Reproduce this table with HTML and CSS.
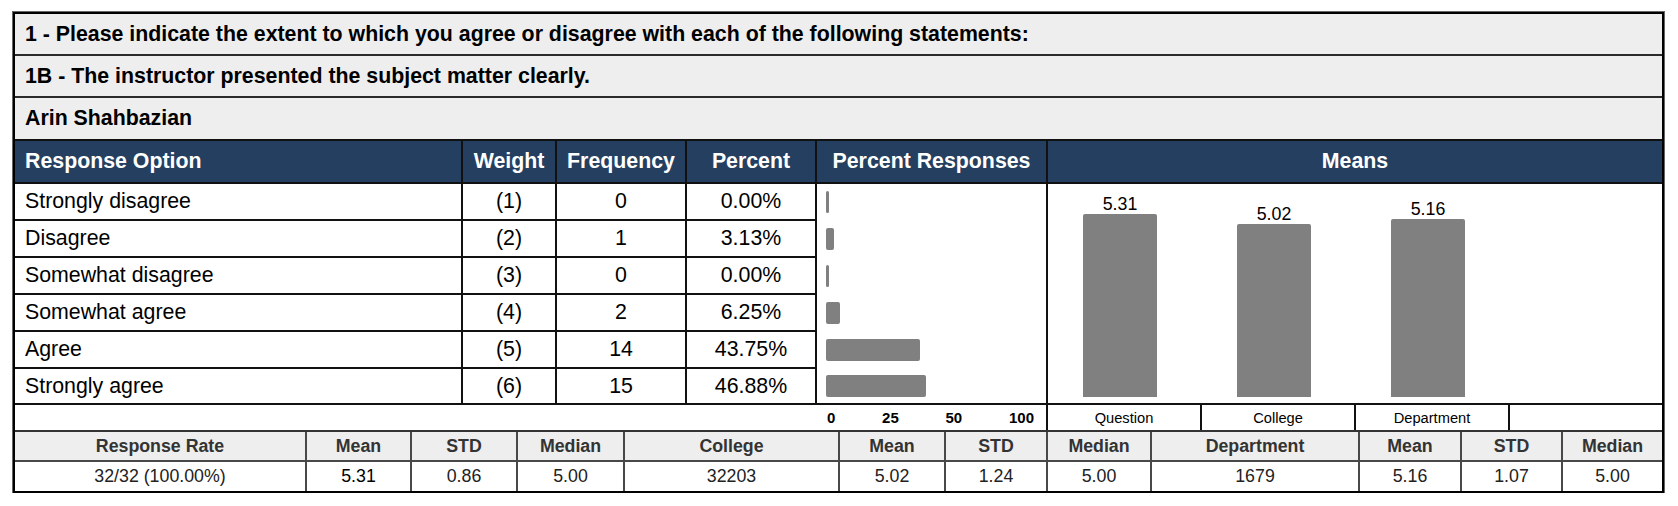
FILE: index.html
```html
<!DOCTYPE html>
<html>
<head>
<meta charset="utf-8">
<title>Question Report</title>
<link rel="stylesheet" href="styles.css">
</head>
<body>
<div class="report">
  <div class="title-row">1 - Please indicate the extent to which you agree or disagree with each of the following statements:</div>
  <div class="title-row">1B - The instructor presented the subject matter clearly.</div>
  <div class="title-row last">Arin Shahbazian</div>

  <div class="grid">
    <div class="hd left">Response Option</div>
    <div class="hd">Weight</div>
    <div class="hd">Frequency</div>
    <div class="hd">Percent</div>
    <div class="hd">Percent Responses</div>
    <div class="hd">Means</div>

    <div class="pr-chart">
      <div class="pr-slot"><span class="hbar" style="width:3px"></span></div>
      <div class="pr-slot"><span class="hbar" style="width:8px"></span></div>
      <div class="pr-slot"><span class="hbar" style="width:3px"></span></div>
      <div class="pr-slot"><span class="hbar" style="width:14px"></span></div>
      <div class="pr-slot"><span class="hbar" style="width:94px"></span></div>
      <div class="pr-slot"><span class="hbar" style="width:100px"></span></div>
    </div>

    <div class="means-chart">
      <div class="mcol"><div class="mbar-wrap"><div class="mval">5.31</div><div class="vbar" style="height:183px"></div></div></div>
      <div class="mcol"><div class="mbar-wrap"><div class="mval">5.02</div><div class="vbar" style="height:173px"></div></div></div>
      <div class="mcol"><div class="mbar-wrap"><div class="mval">5.16</div><div class="vbar" style="height:178px"></div></div></div>
      <div class="mcol"></div>
    </div>

    <div class="cell left">Strongly disagree</div>
    <div class="cell">(1)</div>
    <div class="cell">0</div>
    <div class="cell">0.00%</div>

    <div class="cell left">Disagree</div>
    <div class="cell">(2)</div>
    <div class="cell">1</div>
    <div class="cell">3.13%</div>

    <div class="cell left">Somewhat disagree</div>
    <div class="cell">(3)</div>
    <div class="cell">0</div>
    <div class="cell">0.00%</div>

    <div class="cell left">Somewhat agree</div>
    <div class="cell">(4)</div>
    <div class="cell">2</div>
    <div class="cell">6.25%</div>

    <div class="cell left">Agree</div>
    <div class="cell">(5)</div>
    <div class="cell">14</div>
    <div class="cell">43.75%</div>

    <div class="cell left">Strongly agree</div>
    <div class="cell">(6)</div>
    <div class="cell">15</div>
    <div class="cell">46.88%</div>

    <div class="axis-row">
      <div class="axis"><span>0</span><span>25</span><span>50</span><span>100</span></div>
    </div>
    <div class="means-axis">
      <div>Question</div>
      <div>College</div>
      <div>Department</div>
      <div></div>
    </div>
  </div>

  <div class="footer">
    <div class="fh">Response Rate</div>
    <div class="fh">Mean</div>
    <div class="fh">STD</div>
    <div class="fh">Median</div>
    <div class="fh">College</div>
    <div class="fh">Mean</div>
    <div class="fh">STD</div>
    <div class="fh">Median</div>
    <div class="fh">Department</div>
    <div class="fh">Mean</div>
    <div class="fh">STD</div>
    <div class="fh">Median</div>

    <div class="fd">32/32 (100.00%)</div>
    <div class="fd strong">5.31</div>
    <div class="fd">0.86</div>
    <div class="fd">5.00</div>
    <div class="fd">32203</div>
    <div class="fd">5.02</div>
    <div class="fd">1.24</div>
    <div class="fd">5.00</div>
    <div class="fd">1679</div>
    <div class="fd">5.16</div>
    <div class="fd">1.07</div>
    <div class="fd">5.00</div>
  </div>
</div>
</body>
</html>
```

FILE: styles.css
```css
* {
  box-sizing: border-box;
}

html,
body {
  margin: 0;
  padding: 0;
  background: #fff;
}

body {
  font-family: "Liberation Sans", Arial, Helvetica, sans-serif;
  color: #000;
}

.report {
  width: 1651px;
  margin: 12px 0 0 13px;
  border: 2px solid #000;
  outline: 1px solid #666;
}

.title-row {
  height: 42px;
  display: flex;
  align-items: center;
  padding-left: 10px;
  background: #eeeeee;
  border-bottom: 2px solid #2a2a2a;
  font-size: 21.33px;
  font-weight: bold;
}

.title-row.last {
  height: 43px;
  border-bottom-color: #111;
}

.grid {
  display: grid;
  grid-template-columns: 446px 92px 128px 128px 229px 614px;
  grid-template-rows: 41px 35px 35px 35px 35px 35px 34px 25px;
  gap: 2px;
  background: #111;
}

.hd {
  display: flex;
  align-items: center;
  justify-content: center;
  background: #243f5f;
  color: #fff;
  font-size: 21.33px;
  font-weight: bold;
}

.cell {
  display: flex;
  align-items: center;
  justify-content: center;
  background: #fff;
  font-size: 21.33px;
}

.hd.left,
.cell.left {
  justify-content: flex-start;
  padding-left: 10px;
}

/* Percent responses chart */
.pr-chart {
  grid-column: 5;
  grid-row: 2 / 8;
  display: grid;
  grid-template-rows: 35px 35px 35px 35px 35px 34px;
  row-gap: 2px;
  padding-left: 9px;
  background: #fff;
}

.pr-slot {
  display: flex;
  align-items: center;
}

.hbar {
  display: block;
  height: 22px;
  background: #808080;
  border-radius: 2px;
}

/* Means chart */
.means-chart {
  grid-column: 6;
  grid-row: 2 / 8;
  display: grid;
  grid-template-columns: repeat(4, 1fr);
  column-gap: 2px;
  padding-bottom: 6px;
  background: #fff;
}

.mcol {
  display: flex;
  flex-direction: column;
  justify-content: flex-end;
  padding-left: 35px;
}

.mbar-wrap {
  width: 74px;
  display: flex;
  flex-direction: column;
  align-items: center;
}

.mval {
  font-size: 17.78px;
  line-height: 18px;
  margin-bottom: 1px;
}

.vbar {
  width: 74px;
  background: #808080;
  border-radius: 2px 2px 0 0;
}

/* Axis row */
.axis-row {
  grid-column: 1 / 6;
  grid-row: 8;
  display: flex;
  justify-content: flex-end;
  background: #fff;
}

.axis {
  width: 229px;
  display: flex;
  align-items: center;
  justify-content: space-between;
  padding: 0 12px 0 10px;
  font-size: 15px;
  font-weight: bold;
}

.means-axis {
  grid-column: 6;
  grid-row: 8;
  display: grid;
  grid-template-columns: repeat(4, 1fr);
  column-gap: 2px;
  background: #111;
}

.means-axis div {
  display: flex;
  align-items: center;
  justify-content: center;
  background: #fff;
  font-size: 14.67px;
}

/* Footer stats */
.footer {
  display: grid;
  grid-template-columns: 290px 103px 104px 105px 213px 104px 100px 102px 206px 100px 99px 99px;
  grid-template-rows: 28px 29px;
  gap: 2px;
  background: #484848;
  border-top: 2px solid #333;
}

.fh,
.fd {
  display: flex;
  align-items: center;
  justify-content: center;
  font-size: 17.78px;
}

.fh {
  background: #eeeeee;
  color: #333;
  font-weight: bold;
}

.fd {
  background: #fff;
  color: #222;
}

.fd.strong {
  color: #000;
}
```
